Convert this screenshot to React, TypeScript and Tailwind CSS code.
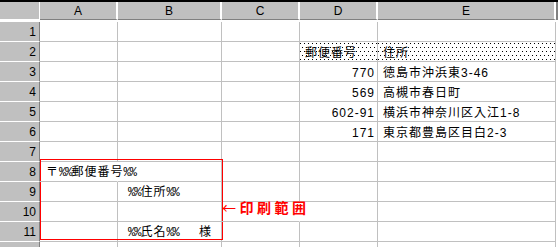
import React from 'react';

type Cell = { text?: React.ReactNode; align?: 'left' | 'right'; pattern?: boolean; overflow?: boolean; cls?: string };

const cols = ['A', 'B', 'C', 'D', 'E'];

// narrow "%%" like the bitmap gothic font
const Pct = () => <span className="font-['Liberation_Mono',monospace] tracking-[-1px]">%%</span>;

const Dots = () => (
    <svg className="absolute inset-0 w-full h-full pointer-events-none" aria-hidden>
        <defs>
            <pattern id="dots" width="4" height="8" patternUnits="userSpaceOnUse">
                <rect x="0" y="1" width="1" height="1" fill="#000" />
                <rect x="2" y="5" width="1" height="1" fill="#000" />
            </pattern>
        </defs>
        <rect width="100%" height="100%" fill="url(#dots)" />
    </svg>
);

const rows: Record<number, Partial<Record<string, Cell>>> = {
    2: { D: { text: '郵便番号', pattern: true }, E: { text: '住所', pattern: true } },
    3: { D: { text: '770', align: 'right' }, E: { text: '徳島市沖浜東3-46' } },
    4: { D: { text: '569', align: 'right' }, E: { text: '高槻市春日町' } },
    5: { D: { text: '602-91', align: 'right' }, E: { text: '横浜市神奈川区入江1-8' } },
    6: { D: { text: '171', align: 'right' }, E: { text: '東京都豊島区目白2-3' } },
    8: {
        A: {
            text: (
                <>
                    〒<Pct />郵便番号<Pct />
                </>
            ),
            overflow: true,
            cls: 'pl-[6px]',
        },
    },
    9: {
        B: {
            text: (
                <>
                    <Pct />住所<Pct />
                </>
            ),
            cls: 'pl-[10px]',
        },
    },
    10: {
        C: {
            text: (
                <span className="font-['Noto_Sans_CJK_JP',sans-serif] text-[14px] font-bold tracking-[3.5px] text-[#ff0000] relative top-[-4px]">
                    <span className="font-normal">←</span>印刷範囲
                </span>
            ),
            overflow: true,
            cls: '!pl-0',
        },
    },
    11: {
        B: {
            text: (
                <span className="flex w-full pr-[9px]">
                    <span>
                        <Pct />氏名<Pct />
                    </span>
                    <span className="ml-auto">様</span>
                </span>
            ),
            cls: 'pl-[10px]',
        },
    },
};

const App: React.FC = () => {
    const rowNums = Array.from({ length: 12 }, (_, i) => i + 1);

    return (
        <div className="relative w-[558px] h-[247px] overflow-hidden bg-white font-['Liberation_Sans','Noto_Sans_CJK_JP',sans-serif] text-[12px] text-black">
            <div className="grid grid-cols-[40px_78px_104px_78px_78px_178px_2px] auto-rows-[20px] border-t-2 border-black">
                {/* header row */}
                <div className="h-[18px] bg-[#c0c0c0] border-r border-b border-r-white border-b-white" />
                {cols.map((c) => (
                    <div
                        key={c}
                        className="h-[18px] flex items-center justify-center bg-[#c0c0c0] border-r-2 border-b border-r-white border-b-[#808080] leading-none"
                    >
                        {c}
                    </div>
                ))}
                <div className="h-[18px] bg-[#808080]" />

                {rowNums.map((r) => (
                    <React.Fragment key={r}>
                        <div className="flex items-end justify-end pr-[3px] pb-[2px] bg-[#c0c0c0] border-r border-b border-r-[#808080] border-b-white leading-[13px]">
                            {r <= 11 ? r : null}
                        </div>
                        {cols.map((c) => {
                            const cell = rows[r]?.[c];
                            const right = cell?.align === 'right';
                            return (
                                <div
                                    key={c}
                                    className={[
                                        'relative flex items-end border-b border-[#c0c0c0] whitespace-nowrap leading-[14px] pb-[1px] tracking-[1px]',
                                        cell?.overflow ? 'border-r border-r-transparent z-10' : 'border-r',
                                        right ? 'justify-end pr-[2px]' : 'pl-[5px]',
                                        cell?.cls ?? '',
                                    ].join(' ')}
                                >
                                    {cell?.pattern && <Dots />}
                                    {cell?.text && <span className={right ? 'relative' : 'relative flex-1'}>{cell.text}</span>}
                                </div>
                            );
                        })}
                        <div className="bg-white" />
                    </React.Fragment>
                ))}
            </div>

            {/* print range marker */}
            <div className="absolute left-[40px] top-[159px] w-[183px] h-[81px] border border-[#ff0000] pointer-events-none" />
        </div>
    );
};

export default App;
